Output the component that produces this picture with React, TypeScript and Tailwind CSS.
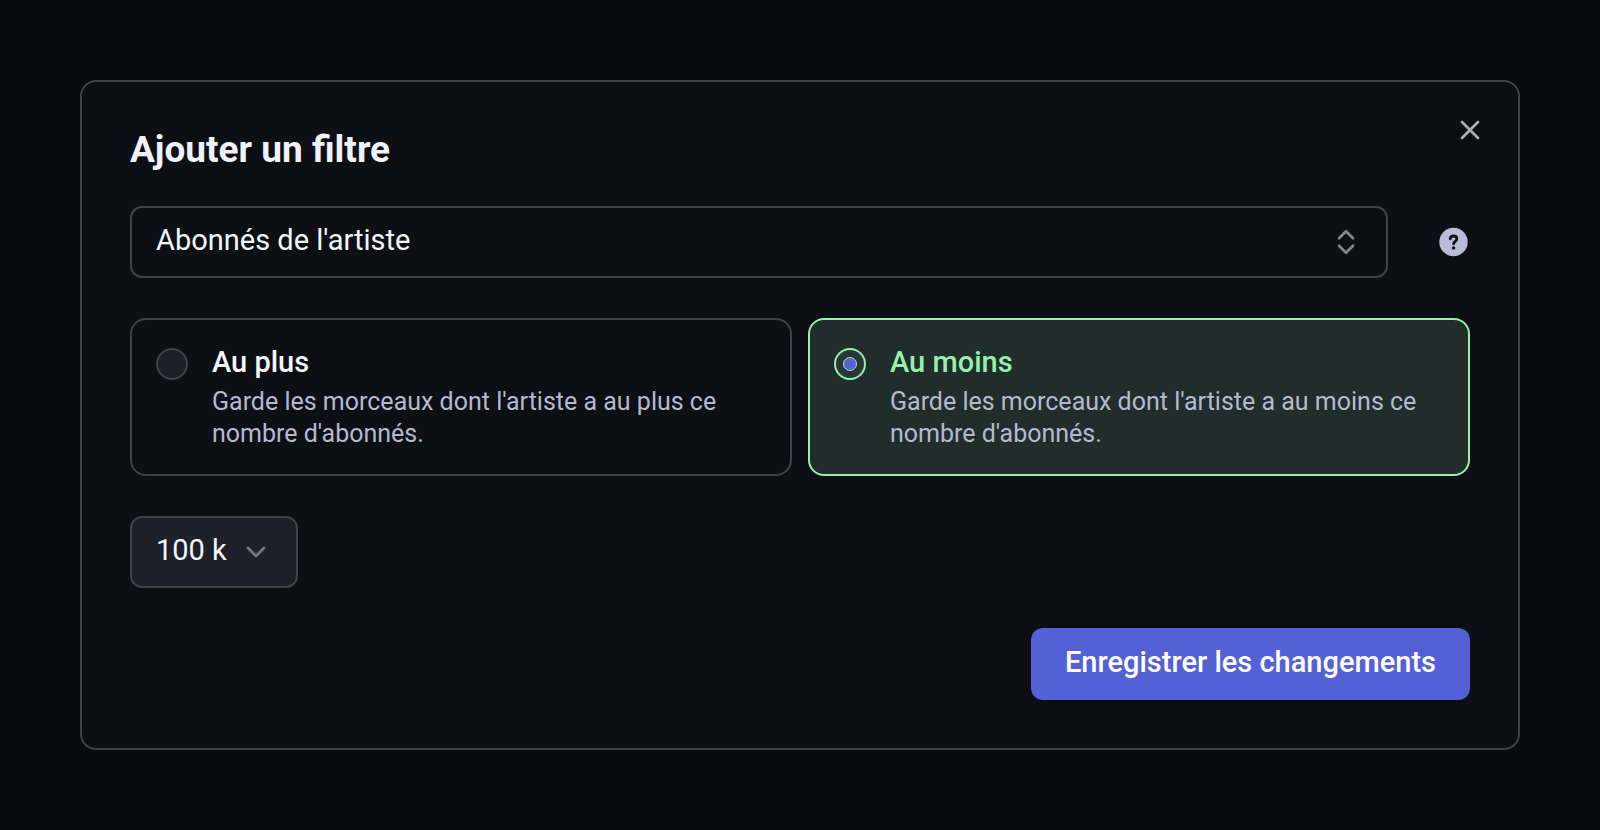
import { useState } from "react";

const operators = [
  {
    id: "at-most",
    label: "Au plus",
    description: "Garde les morceaux dont l'artiste a au plus ce nombre d'abonnés.",
  },
  {
    id: "at-least",
    label: "Au moins",
    description: "Garde les morceaux dont l'artiste a au moins ce nombre d'abonnés.",
  },
];

function FilterSelect() {
  return (
    <div className="flex items-center gap-12">
      <div className="relative flex-1">
        <select
          aria-label="Filtre"
          className="h-18 w-full appearance-none rounded-xl border-2 border-[#40414c] bg-transparent pr-16 pb-0.5 pl-6 text-[29px] text-[#f3f4fc]"
        >
          <option>Abonnés de l'artiste</option>
        </select>
        <svg
          viewBox="0 0 40 40"
          className="pointer-events-none absolute inset-y-0 right-[22px] my-auto size-10"
          fill="none"
          stroke="#85868d"
          strokeWidth="2.7"
          strokeLinecap="round"
          strokeLinejoin="round"
        >
          <path d="M13 16.2 20 9.2 27 16.2M13 23.8 20 30.8 27 23.8" />
        </svg>
      </div>
      <button type="button" aria-label="Aide" className="size-[34px]">
        <svg viewBox="0 0 34 34" fill="none">
          <circle cx="17.5" cy="17" r="14.2" fill="#b9bcd8" />
          <path
            d="M14.2 13.9c.2-1.9 1.5-2.9 3.3-2.9 1.9 0 3.4 1.1 3.4 2.9 0 2.4-3.3 2.4-3.3 4.9"
            stroke="#0e0f15"
            strokeWidth="2.8"
            strokeLinecap="round"
          />
          <circle cx="17.6" cy="23" r="1.8" fill="#0e0f15" />
        </svg>
      </button>
    </div>
  );
}

function OperatorCard(props: any) {
  const { operator, checked, onSelect } = props;

  return (
    <label
      className={`flex cursor-pointer gap-6 rounded-2xl border-2 p-6 ${
        checked ? "border-[#97efab] bg-[#212d2a]" : "border-[#40414c]"
      }`}
    >
      <span className="relative mt-1 size-8 shrink-0">
        <input
          type="radio"
          name="operator"
          checked={checked}
          onChange={() => onSelect(operator.id)}
          className="block size-8 appearance-none rounded-full border-2 border-[#40414c] bg-[#1e1f28] checked:border-[#97efab] checked:bg-[#2a3536]"
        />
        {checked && (
          <span className="pointer-events-none absolute inset-0 m-auto size-3.5 rounded-full border border-[#97efab] bg-[#5460d6]" />
        )}
      </span>
      <span className="flex flex-col gap-1.5">
        <span
          className={`text-[29px] leading-9 font-medium ${
            checked ? "text-[#97efab]" : "text-[#f3f4fc]"
          }`}
        >
          {operator.label}
        </span>
        <span className="text-[25px] leading-8 text-[#b5b9d0]">
          {operator.description}
        </span>
      </span>
    </label>
  );
}

function ThresholdSelect() {
  return (
    <div className="relative self-start">
      <select
        aria-label="Nombre d'abonnés"
        className="h-18 w-[168px] appearance-none rounded-xl border-2 border-[#40414c] bg-[#1e1f28] pb-0.5 pl-6 text-[29px] text-[#f3f4fc]"
      >
        <option>100 k</option>
      </select>
      <svg
        viewBox="0 0 32 32"
        className="pointer-events-none absolute inset-y-0 right-[26px] my-auto size-8"
        fill="none"
        stroke="#74757d"
        strokeWidth="2.7"
        strokeLinecap="round"
        strokeLinejoin="round"
      >
        <path d="M8 12 16 20 24 12" />
      </svg>
    </div>
  );
}

const App = () => {
  const [selected, setSelected] = useState("at-least");

  return (
    <div className="min-h-screen bg-[#090a0d] p-20 font-[Roboto,sans-serif]">
      <div
        role="dialog"
        aria-labelledby="dialog-title"
        className="relative rounded-2xl border-2 border-[#40414c] bg-[#0e0f15] p-12"
      >
        <button
          type="button"
          aria-label="Fermer"
          className="absolute top-8 right-8 size-8"
        >
          <svg
            viewBox="0 0 32 32"
            stroke="#adaeb3"
            strokeWidth="2.7"
            strokeLinecap="round"
          >
            <path d="M8 8 24 24M24 8 8 24" />
          </svg>
        </button>

        <form
          className="flex flex-col gap-10"
          onSubmit={(e) => e.preventDefault()}
        >
          <h1
            id="dialog-title"
            className="pt-1 text-[37px] leading-8 font-bold text-[#f0f2fa]"
          >
            Ajouter un filtre
          </h1>
          <FilterSelect />
          <div className="grid grid-cols-2 gap-4">
            {operators.map((operator) => (
              <OperatorCard
                key={operator.id}
                operator={operator}
                checked={selected === operator.id}
                onSelect={setSelected}
              />
            ))}
          </div>
          <ThresholdSelect />
          <button
            type="submit"
            className="h-18 self-end rounded-xl bg-[#5460d6] px-[34px] pb-0.5 text-[29px] font-medium text-white"
          >
            Enregistrer les changements
          </button>
        </form>
      </div>
    </div>
  );
};

export default App;
